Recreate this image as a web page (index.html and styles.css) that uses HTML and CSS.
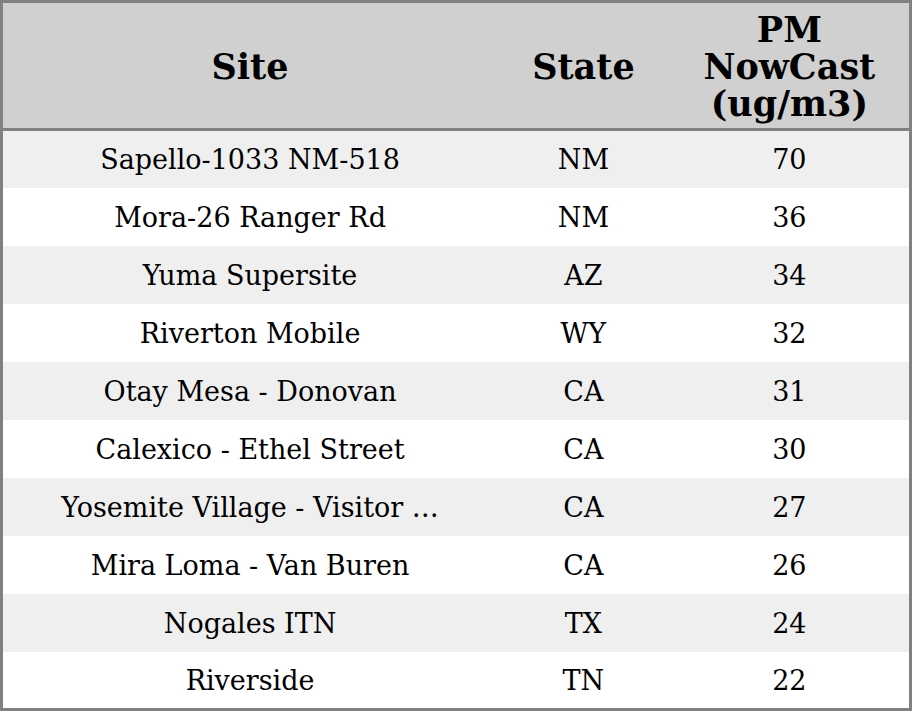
FILE: index.html
```html
<!DOCTYPE html>
<html>
<head>
<meta charset="utf-8">
<link rel="stylesheet" href="styles.css">
</head>
<body>
<table class="aq-table">
  <colgroup>
    <col class="col-site">
    <col class="col-state">
    <col class="col-pm">
  </colgroup>
  <thead>
    <tr class="head-row">
      <th>Site</th>
      <th>State</th>
      <th>PM<br>NowCast<br>(ug/m3)</th>
    </tr>
  </thead>
  <tbody>
    <tr><td>Sapello-1033 NM-518</td><td>NM</td><td>70</td></tr>
    <tr><td>Mora-26 Ranger Rd</td><td>NM</td><td>36</td></tr>
    <tr><td>Yuma Supersite</td><td>AZ</td><td>34</td></tr>
    <tr><td>Riverton Mobile</td><td>WY</td><td>32</td></tr>
    <tr><td>Otay Mesa - Donovan</td><td>CA</td><td>31</td></tr>
    <tr><td>Calexico - Ethel Street</td><td>CA</td><td>30</td></tr>
    <tr><td>Yosemite Village - Visitor …</td><td>CA</td><td>27</td></tr>
    <tr><td>Mira Loma - Van Buren</td><td>CA</td><td>26</td></tr>
    <tr><td>Nogales ITN</td><td>TX</td><td>24</td></tr>
    <tr><td>Riverside</td><td>TN</td><td>22</td></tr>
  </tbody>
</table>
</body>
</html>
```
FILE: styles.css
```css
html, body {
  margin: 0;
  padding: 0;
  background: #ffffff;
}

.aq-table {
  width: 912px;
  border-collapse: collapse;
  border: 3px solid #808080;
  table-layout: fixed;
  font-family: "DejaVu Serif", serif;
  color: #000000;
}

.col-site { width: 494px; }
.col-state { width: 172px; }
.col-pm { width: 240px; }

.aq-table th,
.aq-table td {
  padding: 0;
  text-align: center;
  vertical-align: middle;
}

.head-row {
  height: 128px;
  background: #d0d0d0;
  border-bottom: 3px solid #808080;
}

.aq-table th {
  font-size: 35px;
  font-weight: bold;
  line-height: 37px;
  padding-top: 2px;
}

.aq-table tbody tr {
  height: 58px;
}

.aq-table tbody tr:nth-child(odd) {
  background: #efefef;
}

.aq-table td {
  font-size: 27px;
  line-height: 30px;
  padding-top: 2px;
  white-space: nowrap;
}
```
